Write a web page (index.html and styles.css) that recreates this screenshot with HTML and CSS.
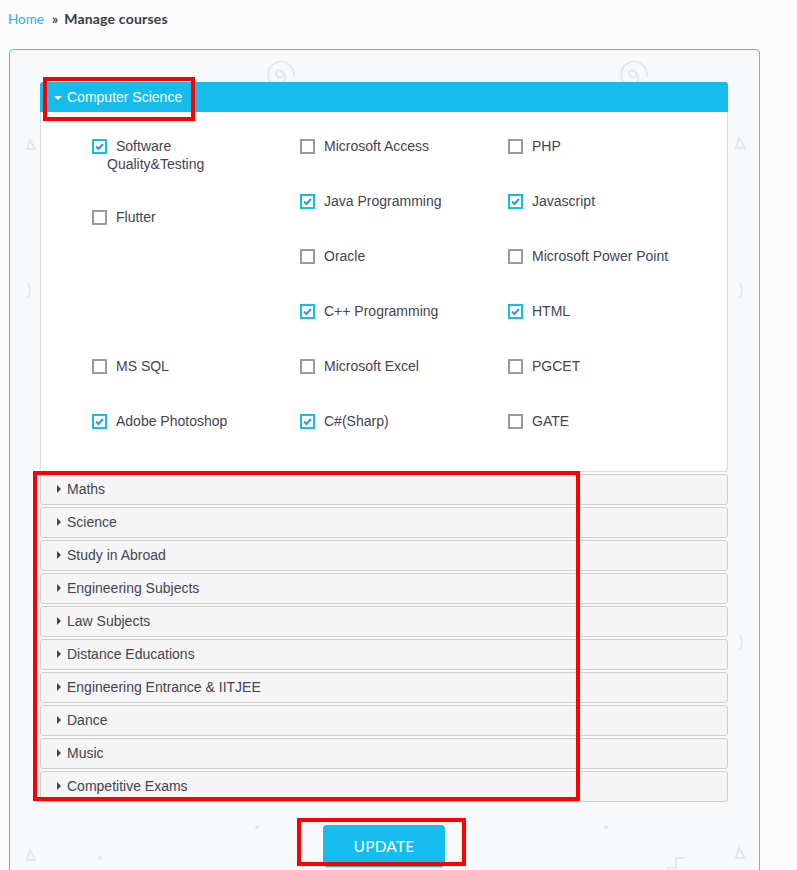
FILE: index.html
```html
<!DOCTYPE html>
<html lang="en">
<head>
<meta charset="utf-8">
<title>Manage courses</title>
<link rel="stylesheet" href="styles.css">
</head>
<body>
<div class="page">
  <nav class="crumbs"><a href="#" class="crumb-link">Home</a><span class="crumb-sep">»</span><span class="crumb-current">Manage courses</span></nav>

  <section class="card">
    <svg class="doodles" width="749" height="840" viewBox="0 0 749 840" aria-hidden="true">
      <g fill="none" stroke="#e6e8ec" stroke-width="2" stroke-linecap="round">
        <path d="M274 24 a4 4 0 1 1 -6 -4 a8 8 0 1 1 -6 14 a13 13 0 1 1 22 -8"/>
        <path d="M627 24 a4 4 0 1 1 -6 -4 a8 8 0 1 1 -6 14 a13 13 0 1 1 22 -8"/>
        <path d="M20 90 l5 9 h-8 z"/>
        <path d="M729 88 l6 10 h-9 z"/>
        <path d="M690 500 l6 10 h-9 z"/>
        <path d="M20 800 l5 10 h-8 z"/>
        <path d="M729 798 l6 10 h-9 z"/>
        <path d="M18 234 q4 7 0 14"/>
        <path d="M730 234 q4 7 0 14"/>
        <path d="M730 586 q4 7 0 14"/>
        <path d="M658 830 v-12 h8 v-10 h8"/>
      </g>
      <g fill="#e6e8ec">
        <circle cx="247" cy="777" r="2"/>
        <circle cx="596" cy="777" r="2"/>
        <circle cx="90" cy="808" r="2"/>
        <circle cx="451" cy="808" r="2"/>
      </g>
    </svg>

    <div class="accordion">
      <div class="panel open">
        <div class="panel-head"><span class="caret-down"></span>Computer Science</div>
        <div class="panel-body">
          <div class="grid">
            <label class="chk"><span class="box on"><svg width="11" height="11" viewBox="0 0 11 11"><path d="M2 5.5 L4.5 8 L9 3" fill="none" stroke="#1f9fe0" stroke-width="2"/></svg></span>Software<br>Quality&amp;Testing</label>
            <label class="chk"><span class="box"></span>Microsoft Access</label>
            <label class="chk"><span class="box"></span>PHP</label>

            <label class="chk shift"><span class="box"></span>Flutter</label>
            <label class="chk"><span class="box on"><svg width="11" height="11" viewBox="0 0 11 11"><path d="M2 5.5 L4.5 8 L9 3" fill="none" stroke="#1f9fe0" stroke-width="2"/></svg></span>Java Programming</label>
            <label class="chk"><span class="box on"><svg width="11" height="11" viewBox="0 0 11 11"><path d="M2 5.5 L4.5 8 L9 3" fill="none" stroke="#1f9fe0" stroke-width="2"/></svg></span>Javascript</label>

            <div class="gap"></div>
            <label class="chk"><span class="box"></span>Oracle</label>
            <label class="chk"><span class="box"></span>Microsoft Power Point</label>

            <div class="gap"></div>
            <label class="chk"><span class="box on"><svg width="11" height="11" viewBox="0 0 11 11"><path d="M2 5.5 L4.5 8 L9 3" fill="none" stroke="#1f9fe0" stroke-width="2"/></svg></span>C++ Programming</label>
            <label class="chk"><span class="box on"><svg width="11" height="11" viewBox="0 0 11 11"><path d="M2 5.5 L4.5 8 L9 3" fill="none" stroke="#1f9fe0" stroke-width="2"/></svg></span>HTML</label>

            <label class="chk"><span class="box"></span>MS SQL</label>
            <label class="chk"><span class="box"></span>Microsoft Excel</label>
            <label class="chk"><span class="box"></span>PGCET</label>

            <label class="chk"><span class="box on"><svg width="11" height="11" viewBox="0 0 11 11"><path d="M2 5.5 L4.5 8 L9 3" fill="none" stroke="#1f9fe0" stroke-width="2"/></svg></span>Adobe Photoshop</label>
            <label class="chk"><span class="box on"><svg width="11" height="11" viewBox="0 0 11 11"><path d="M2 5.5 L4.5 8 L9 3" fill="none" stroke="#1f9fe0" stroke-width="2"/></svg></span>C#(Sharp)</label>
            <label class="chk"><span class="box"></span>GATE</label>
          </div>
        </div>
      </div>

      <div class="panel"><div class="panel-head"><span class="caret-right"></span>Maths</div></div>
      <div class="panel"><div class="panel-head"><span class="caret-right"></span>Science</div></div>
      <div class="panel"><div class="panel-head"><span class="caret-right"></span>Study in Abroad</div></div>
      <div class="panel"><div class="panel-head"><span class="caret-right"></span>Engineering Subjects</div></div>
      <div class="panel"><div class="panel-head"><span class="caret-right"></span>Law Subjects</div></div>
      <div class="panel"><div class="panel-head"><span class="caret-right"></span>Distance Educations</div></div>
      <div class="panel"><div class="panel-head"><span class="caret-right"></span>Engineering Entrance &amp; IITJEE</div></div>
      <div class="panel"><div class="panel-head"><span class="caret-right"></span>Dance</div></div>
      <div class="panel"><div class="panel-head"><span class="caret-right"></span>Music</div></div>
      <div class="panel"><div class="panel-head"><span class="caret-right"></span>Competitive Exams</div></div>
    </div>

    <div class="actions">
      <button class="btn-update" type="button">UPDATE</button>
    </div>
  </section>

  <div class="mark mark-head"></div>
  <div class="mark mark-list"></div>
  <div class="mark mark-btn"></div>
</div>
</body>
</html>
```

FILE: styles.css
```css
html, body {
  margin: 0;
  padding: 0;
  background: #fcfcfc;
}

.page {
  position: relative;
  padding: 9px 0 0 8px;
  height: 861px;
  overflow: hidden;
}

.crumbs {
  font-family: Lato, "Liberation Sans", sans-serif;
  font-size: 13.5px;
  line-height: 20px;
  height: 20px;
  color: #3b3b4b;
}

.crumb-link {
  color: #1cb3e8;
  text-decoration: none;
}

.crumb-sep {
  margin: 0 6px 0 8px;
  font-weight: 700;
}

.crumb-current {
  font-weight: 700;
  font-size: 14px;
  letter-spacing: 0.2px;
}

.card {
  position: relative;
  margin: 20px 0 0 1px;
  width: 751px;
  box-sizing: border-box;
  border: 1px solid #1fd6ee;
  border-radius: 4px;
  background: #f8f9fb;
  padding: 32px 31px 60px 30px;
}

.doodles {
  position: absolute;
  left: 0;
  top: 0;
  z-index: 0;
}

.accordion {
  position: relative;
  z-index: 1;
  font-family: "Liberation Sans", Arial, sans-serif;
  font-size: 14px;
  color: #444452;
}

.panel {
  margin-bottom: 2px;
}

.panel-head {
  display: flex;
  align-items: center;
  box-sizing: border-box;
  height: 31px;
  padding: 0 0 2px 15px;
  background: #f5f5f5;
  border: 1px solid #cfcfcf;
  border-radius: 3px;
  color: #444452;
}

.panel.open .panel-head {
  height: 30px;
  border: none;
  border-radius: 3px 3px 0 0;
  background: #16bdec;
  color: #ffffff;
  padding: 0 0 0 14px;
}

.caret-down {
  width: 0;
  height: 0;
  border-left: 4px solid transparent;
  border-right: 4px solid transparent;
  border-top: 4px solid #ffffff;
  margin: 1px 5px 0 0;
}

.caret-right {
  width: 0;
  height: 0;
  border-top: 4px solid transparent;
  border-bottom: 4px solid transparent;
  border-left: 4px solid #444;
  margin: 1px 6px 0 1px;
}

.panel-body {
  background: #ffffff;
  border: 1px solid #dddddd;
  border-top: none;
  border-radius: 0 0 3px 3px;
  padding: 25px 0 4px 52px;
}

.grid {
  display: grid;
  grid-template-columns: repeat(3, 208px);
  grid-template-rows: repeat(6, 55px);
}

.chk {
  display: block;
  padding-left: 14px;
  text-indent: -15px;
  line-height: 18px;
  color: #444452;
}

.chk.shift {
  margin-top: 16px;
}

.box {
  display: inline-block;
  box-sizing: border-box;
  width: 15px;
  height: 15px;
  border: 2px solid #9b9b9b;
  background: #ffffff;
  margin-right: 9px;
  vertical-align: -3px;
  text-indent: 0;
  position: relative;
}

.box.on {
  border-color: #16bdec;
}

.box svg {
  display: block;
  margin: 0;
}

.actions {
  position: relative;
  z-index: 1;
  display: flex;
  justify-content: center;
  margin-top: 23px;
}

.btn-update {
  width: 122px;
  height: 42px;
  border: none;
  border-radius: 4px;
  background: #16bdec;
  color: #ffffff;
  font-family: Lato, "Liberation Sans", sans-serif;
  font-size: 15.5px;
  letter-spacing: 0.2px;
}

.mark {
  position: absolute;
  box-sizing: border-box;
  border: 4px solid #ff0000;
  z-index: 5;
}

.mark-head {
  left: 43px;
  top: 77px;
  width: 152px;
  height: 44px;
}

.mark-list {
  left: 33px;
  top: 471px;
  width: 547px;
  height: 330px;
}

.mark-btn {
  left: 297px;
  top: 818px;
  width: 169px;
  height: 48px;
}
```
